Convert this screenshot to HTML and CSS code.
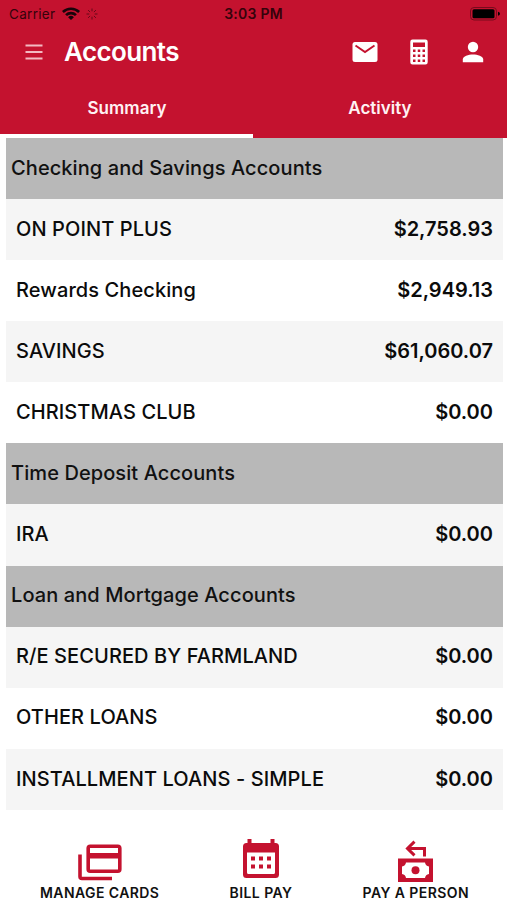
FILE: index.html
```html
<!DOCTYPE html>
<html lang="en">
<head>
<meta charset="utf-8">
<title>Accounts</title>
<link rel="stylesheet" href="styles.css">
</head>
<body>
<div class="app">
  <header class="top">
    <div class="status">
      <div class="carrier">
        <span>Carrier</span>
        <svg class="wifi" viewBox="0 0 18 13"><path d="M0 4A13 13 0 0 1 18 4L16.200 5.900A10.400 10.400 0 0 0 1.800 5.900ZM3.100 7.200A8.500 8.500 0 0 1 14.900 7.200L13 9.100A5.700 5.700 0 0 0 5 9.100ZM6.100 10.200A4.200 4.200 0 0 1 11.900 10.200L9 13Z"/></svg>
        <svg class="spinner" viewBox="0 0 12 12"><path d="M6 0.500V3.300M6 8.700V11.500M0.500 6H3.300M8.700 6H11.500M2.100 2.100L4.100 4.100M7.900 7.900L9.900 9.900M2.100 9.900L4.100 7.900M7.900 4.100L9.900 2.100"/></svg>
      </div>
      <span class="time">3:03 PM</span>
      <svg class="battery" viewBox="0 0 31 14"><rect class="case" x=".5" y=".5" width="26" height="12.500" rx="3.500"/><rect x="2.500" y="2.300" width="22" height="9" rx="1.500"/><path d="M28 4.700Q30 5.300 30 6.700T28 8.700Z"/></svg>
    </div>
    <div class="bar">
      <svg class="menu" viewBox="0 0 18 16"><path d="M.5 1.500H17.500M.5 8H17.500M.5 14.500H17.500"/></svg>
      <h1>Accounts</h1>
      <svg class="mail" viewBox="0 0 26 22"><rect x=".5" y="1" width="25" height="20" rx="2.500"/><path d="M3.500 4.500L13 11L22.500 4.500"/></svg>
      <svg class="calc" viewBox="0 0 18 26"><path fill-rule="evenodd" d="M2.500 .5H15.500Q17.700 .5 17.700 2.700V23.300Q17.700 25.500 15.500 25.500H2.500Q.3 25.500 .3 23.300V2.700Q.3 .5 2.500 .5ZM3 3.500V8H15V3.500ZM3 10.500V13H5.500V10.500ZM7.750 10.500V13H10.250V10.500ZM12.500 10.500V13H15V10.500ZM3 15.500V18H5.500V15.500ZM7.750 15.500V18H10.250V15.500ZM12.500 15.500V18H15V15.500ZM3 20.500V23H5.500V20.500ZM7.750 20.500V23H10.250V20.500ZM12.500 20.500V23H15V20.500Z"/></svg>
      <svg class="person" viewBox="0 0 22 22"><circle cx="11" cy="6" r="5.200"/><path d="M.8 21.200V18.500C.8 15.300 6.500 13.500 11 13.500S21.200 15.300 21.200 18.500V21.200Z"/></svg>
    </div>
    <nav class="tabs">
      <div class="tab active"><span>Summary</span></div>
      <div class="tab"><span>Activity</span></div>
    </nav>
  </header>
  <main class="list">
    <h2>Checking and Savings Accounts</h2>
    <div class="row shade"><span>ON POINT PLUS</span><span class="amount">$2,758.93</span></div>
    <div class="row"><span>Rewards Checking</span><span class="amount">$2,949.13</span></div>
    <div class="row shade"><span>SAVINGS</span><span class="amount">$61,060.07</span></div>
    <div class="row"><span>CHRISTMAS CLUB</span><span class="amount">$0.00</span></div>
    <h2>Time Deposit Accounts</h2>
    <div class="row shade"><span>IRA</span><span class="amount">$0.00</span></div>
    <h2>Loan and Mortgage Accounts</h2>
    <div class="row shade"><span>R/E SECURED BY FARMLAND</span><span class="amount">$0.00</span></div>
    <div class="row"><span>OTHER LOANS</span><span class="amount">$0.00</span></div>
    <div class="row shade"><span>INSTALLMENT LOANS - SIMPLE</span><span class="amount">$0.00</span></div>
  </main>
  <footer class="actions">
    <div class="action">
      <svg viewBox="0 0 44 44"><g class="line"><rect x="10.200" y="7.200" width="31.600" height="25" rx="2"/><path d="M2 15.500V37.500Q2 39.500 4 39.500H34"/></g><path d="M9 14H43V19.500H9Z"/></svg>
      <span>MANAGE CARDS</span>
    </div>
    <div class="action">
      <svg viewBox="0 0 44 44"><path fill-rule="evenodd" d="M8.500 0H12.500V4H31.500V0H35.500V4H36.500Q40 4 40 7.500V35.500Q40 39 36.500 39H7.500Q4 39 4 35.500V7.500Q4 4 7.500 4H8.500ZM8 13.500V33.500Q8 35 9.500 35H34.500Q36 35 36 33.500V13.500Z"/><path d="M12 17.500h4v4h-4zM20 17.500h4v4h-4zM28 17.500h4v4h-4zM12 25.500h4v4h-4zM20 25.500h4v4h-4zM28 25.500h4v4h-4z"/></svg>
      <span>BILL PAY</span>
    </div>
    <div class="action">
      <svg viewBox="0 0 44 44"><path class="line arrow" d="M30.500 17.500V9.500H14M20.500 2.700L13.500 9.500L20.500 16.300"/><path fill-rule="evenodd" d="M4 19.500H39V43H4ZM12 23.500Q11.500 27 8 27.500V35Q11.500 35.500 12 39H31Q31.500 35.500 35 35V27.500Q31.500 27 31 23.500Z"/><circle cx="21.500" cy="31.200" r="4"/></svg>
      <span>PAY A PERSON</span>
    </div>
  </footer>
</div>
</body>
</html>
```
FILE: styles.css
```css
* { box-sizing: border-box; }
body { margin: 0; background: #fff; font-family: Inter, "Liberation Sans", sans-serif; color: #111; }
.app { width: 507px; height: 900px; display: flex; flex-direction: column; overflow: hidden; }
.top { height: 138px; flex: none; background: #c4122f; }
.status { height: 27px; display: grid; grid-template-columns: 1fr auto 1fr; align-items: center; padding: 0 6px; color: #35030b; font-size: 13.5px; }
.carrier { display: flex; align-items: center; padding-left: 3px; letter-spacing: .3px; }
.wifi { width: 18px; height: 13px; margin-left: 7px; fill: #18040a; }
.spinner { width: 12px; height: 12px; margin-left: 6px; stroke: #650918; stroke-width: 1; }
.time { font-weight: 600; font-size: 14px; letter-spacing: .25px; }
.battery { width: 31px; height: 14px; justify-self: end; fill: #000; }
.case { fill: none; stroke: #780b1d; }
.bar { height: 50px; display: flex; align-items: center; padding: 0 23px 0 25px; fill: #fff; }
.bar svg { flex: none; }
.menu { width: 18px; height: 16px; stroke: #f3b9c2; stroke-width: 1.800; }
h1 { margin: 0 auto 0 21px; font-size: 26px; font-weight: 600; line-height: 30px; color: #fff; letter-spacing: -.6px; }
.mail { width: 26px; height: 22px; margin-right: 32px; }
.mail path { fill: none; stroke: #c4122f; stroke-width: 2; }
.calc { width: 18px; height: 26px; margin-right: 34px; }
.person { width: 22px; height: 22px; }
.tabs { height: 61px; display: grid; grid-template-columns: 253px 1fr; color: #fff2f4; font-size: 17px; font-weight: 600; }
.tab { display: flex; align-items: center; justify-content: center; padding-top: 4px; border-bottom: 4px solid transparent; }
.active { border-color: #fff; padding-left: 1px; }
.list { width: 497px; margin-left: 6px; font-size: 20px; font-weight: 500; letter-spacing: .09px; }
h2, .row { height: 61.09px; display: flex; align-items: center; margin: 0; padding-bottom: 1.5px; }
h2 { padding-left: 5px; background: #b8b8b8; font-size: 20px; font-weight: 500; }
.row { justify-content: space-between; padding: 0 10px 1.5px; color: #0b0b0b; }
.shade { background: #f5f5f5; }
.amount { font-weight: 600; letter-spacing: 0; }
.actions { flex: 1; display: flex; justify-content: space-between; padding: 29px 38px 0 40px; font-size: 14px; font-weight: 600; letter-spacing: .42px; }
.action { display: flex; flex-direction: column; align-items: center; }
.action svg { width: 44px; height: 44px; fill: #c4122f; }
.action .line { fill: none; stroke: #c4122f; stroke-width: 3.600; }
.action .arrow { stroke-width: 3; }
.action span { line-height: 20px; }
```
